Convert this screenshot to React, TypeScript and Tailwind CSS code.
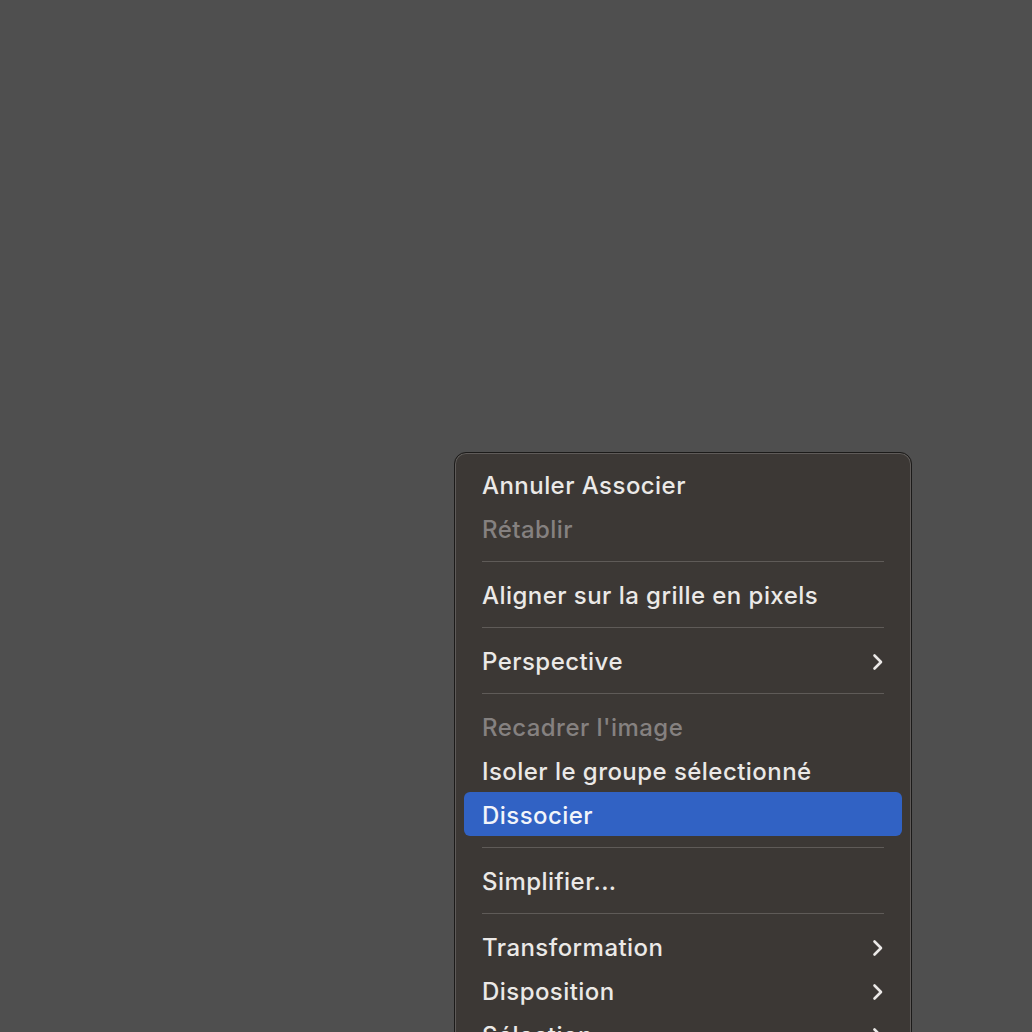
import React from 'react';

type Item =
  | { kind: 'item'; label: string; disabled?: boolean; active?: boolean; submenu?: boolean }
  | { kind: 'sep' };

const items: Item[] = [
  { kind: 'item', label: 'Annuler Associer' },
  { kind: 'item', label: 'Rétablir', disabled: true },
  { kind: 'sep' },
  { kind: 'item', label: 'Aligner sur la grille en pixels' },
  { kind: 'sep' },
  { kind: 'item', label: 'Perspective', submenu: true },
  { kind: 'sep' },
  { kind: 'item', label: "Recadrer l'image", disabled: true },
  { kind: 'item', label: 'Isoler le groupe sélectionné' },
  { kind: 'item', label: 'Dissocier', active: true },
  { kind: 'sep' },
  { kind: 'item', label: 'Simplifier...' },
  { kind: 'sep' },
  { kind: 'item', label: 'Transformation', submenu: true },
  { kind: 'item', label: 'Disposition', submenu: true },
  { kind: 'item', label: 'Sélection', submenu: true },
  { kind: 'item', label: 'Masque d’écrêtage', submenu: true },
];

const Chevron = () => (
  <svg width="14" height="20" viewBox="0 0 14 20" fill="none" className="mt-[3px]">
    <path d="M3.5 3.5 L10 10 L3.5 16.5" stroke="currentColor" strokeWidth="2.6" strokeLinecap="round" strokeLinejoin="round" />
  </svg>
);

export default function App() {
  return (
    <div className="w-[1032px] h-[1032px] overflow-hidden bg-[#4f4f4f] pt-[452px] pl-[454px] font-['Inter',sans-serif]">
      <div className="w-[458px] rounded-[12px] border border-[#1c1b1a] bg-[#3c3835] shadow-[inset_0_0_0_1px_rgba(255,255,255,0.18)] pt-[9px] px-[9px] pb-[10px]">
        {items.map((it, i) =>
          it.kind === 'sep' ? (
            <div key={i} className="h-[22px] flex items-center px-[18px]">
              <div className="h-px w-full bg-[#5f5b58]" />
            </div>
          ) : (
            <div
              key={i}
              className={
                'h-[44px] flex items-center justify-between pl-[18px] pr-[17px] rounded-[6px] text-[24px] font-[450] tracking-[0.45px] ' +
                (it.active ? 'bg-[#3162c4] text-[#f2f4fa] ' : '') +
                (it.disabled ? 'text-[#858180]' : it.active ? '' : 'text-[#ebe9e7]')
              }
            >
              <span className="pt-[3px]">{it.label}</span>
              {it.submenu && <Chevron />}
            </div>
          )
        )}
      </div>
    </div>
  );
}
